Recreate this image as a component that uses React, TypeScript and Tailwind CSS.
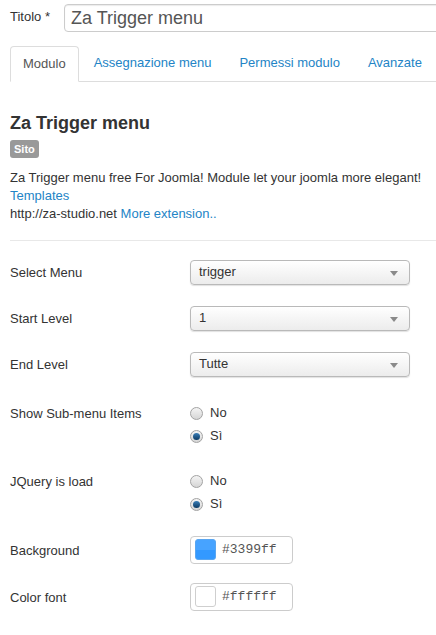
import React from "react";

const FONT = { fontFamily: '"Liberation Sans", Arial, sans-serif' };

function Select({ value }: { value: string }) {
  return (
    <div className="relative flex h-[25px] w-[220px] shrink-0 items-center rounded-[4px] border border-[#b9b9b9] bg-gradient-to-b from-white to-[#ececec] pl-[8px] text-[13px] text-[#333] shadow-[0_1px_1px_rgba(0,0,0,0.12)]">
      <span>{value}</span>
      <svg className="absolute right-[11px] top-[10px]" width="8" height="5" viewBox="0 0 8 5">
        <path d="M0 0h8L4 5z" fill="#8a8a8a" />
      </svg>
    </div>
  );
}

function Radio({ label, checked }: { label: string; checked?: boolean }) {
  return (
    <div className="flex h-[23px] items-center gap-[7px]">
      <span className="flex h-[13px] w-[13px] items-center justify-center rounded-full border border-[#a3a3a3] bg-gradient-to-b from-[#f4f4f4] to-[#d6d6d6]">
        {checked ? (
          <span className="h-[7px] w-[7px] rounded-full bg-gradient-to-b from-[#3a7fb8] to-[#0c3a63]" />
        ) : null}
      </span>
      <span className="text-[13px] text-[#333]">{label}</span>
    </div>
  );
}

function ColorField({ color, border }: { color: string; border: string }) {
  return (
    <div className="flex h-[28px] w-[103px] shrink-0 items-center gap-[6px] rounded-[4px] border border-[#cccccc] bg-white pl-[4px]">
      <span
        className="relative h-[21px] w-[21px] overflow-hidden rounded-[3px] border"
        style={{ background: color, borderColor: border }}
      >
        <span className="absolute inset-x-0 top-0 h-1/2 bg-white/10" />
      </span>
      <span className="text-[13px] text-[#555]" style={{ fontFamily: '"Liberation Mono", "DejaVu Sans Mono", monospace' }}>
        {color}
      </span>
    </div>
  );
}

export default function App() {
  const tabs = ["Assegnazione menu", "Permessi modulo", "Avanzate"];
  return (
    <div className="h-[635px] w-[436px] overflow-hidden whitespace-nowrap bg-white text-[13px] text-[#333]" style={FONT}>
      <div className="flex items-center pt-[4px]">
        <label className="w-[64px] shrink-0 pb-[3px] pl-[10px] text-[13px] text-[#333]">Titolo *</label>
        <div className="flex h-[28px] w-[390px] shrink-0 items-center rounded-[4px] border border-[#cccccc] pl-[6px] text-[18px] text-[#555] shadow-[inset_0_1px_1px_rgba(0,0,0,0.08)]">
          Za Trigger menu
        </div>
      </div>

      <ul className="ml-[10px] mt-[14px] flex border-b border-[#dddddd]">
        <li className="-mb-px mr-[2px] shrink-0 rounded-t-[4px] border border-[#dddddd] border-b-white bg-white px-[12px] py-[8px] leading-[18px] text-[#555]">
          Modulo
        </li>
        {tabs.map((t) => (
          <li key={t} className="mr-[2px] shrink-0 px-[13px] py-[8px] leading-[18px] text-[#2384c6]">
            {t}
          </li>
        ))}
      </ul>

      <div className="pl-[10px]">
        <h2 className="mt-[31px] text-[18px] font-bold leading-[20px] text-[#333]">Za Trigger menu</h2>
        <span className="mt-[7px] inline-block rounded-[3px] bg-[#999999] px-[4px] text-[11px] font-bold leading-[18px] text-white">
          Sito
        </span>
        <div className="mt-[10px] leading-[18px]">
          <p>Za Trigger menu free For Joomla! Module let your joomla more elegant!</p>
          <p className="text-[#2384c6]">Templates</p>
          <p>
            http://za-studio.net <span className="text-[#2384c6]">More extension..</span>
          </p>
        </div>
        <div className="mt-[17px] border-t border-[#e8e8e8]" />

        <div className="mt-[19px] flex flex-col">
          <div className="flex items-center">
            <div className="w-[180px] shrink-0 pt-[2px]">Select Menu</div>
            <Select value="trigger" />
          </div>
          <div className="mt-[21px] flex items-center">
            <div className="w-[180px] shrink-0 pt-[2px]">Start Level</div>
            <Select value="1" />
          </div>
          <div className="mt-[21px] flex items-center">
            <div className="w-[180px] shrink-0 pt-[2px]">End Level</div>
            <Select value="Tutte" />
          </div>

          <div className="mt-[25px] flex">
            <div className="w-[180px] shrink-0 leading-[23px]">Show Sub-menu Items</div>
            <div className="flex flex-col">
              <Radio label="No" />
              <Radio label="Sì" checked />
            </div>
          </div>
          <div className="mt-[22px] flex">
            <div className="w-[180px] shrink-0 leading-[23px]">JQuery is load</div>
            <div className="flex flex-col">
              <Radio label="No" />
              <Radio label="Sì" checked />
            </div>
          </div>

          <div className="mt-[20px] flex items-center">
            <div className="w-[180px] shrink-0 pt-[2px]">Background</div>
            <ColorField color="#3399ff" border="#5aa6f0" />
          </div>
          <div className="mt-[19px] flex items-center">
            <div className="w-[180px] shrink-0 pt-[2px]">Color font</div>
            <ColorField color="#ffffff" border="#cfcfcf" />
          </div>
        </div>
      </div>
    </div>
  );
}
